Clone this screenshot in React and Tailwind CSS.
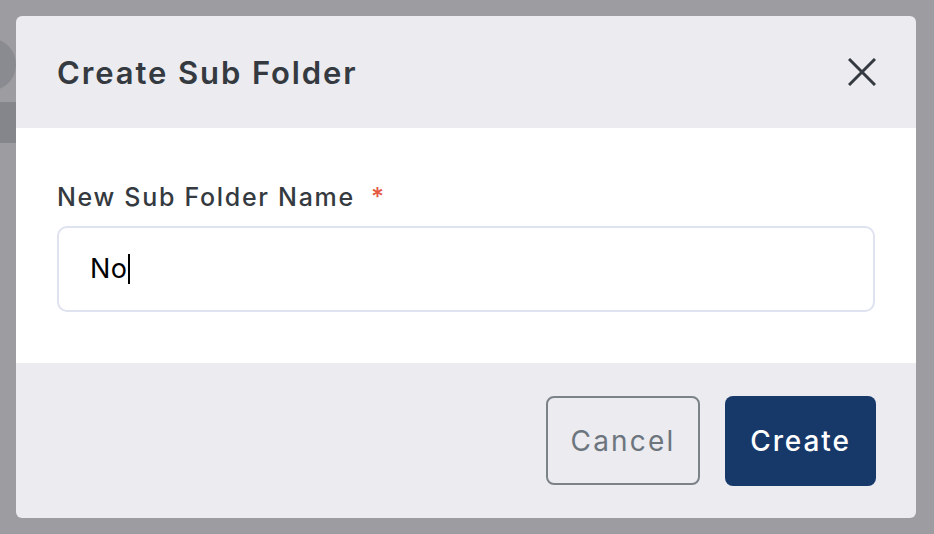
import React from "react";

export default function App() {
  return (
    <div className="relative w-[934px] h-[534px] bg-[#9d9da1] p-4 overflow-hidden" style={{ fontFamily: "Inter, 'Noto Sans', sans-serif" }}>
      {/* page behind the overlay */}
      <div className="absolute left-[-38px] top-[38px] w-[54px] h-[53px] rounded-full bg-[#8a8b90]" />
      <div className="absolute left-0 top-[102px] w-[16px] h-[41px] bg-[#85868b]" />

      <div className="relative w-[900px] h-[502px] rounded-md overflow-hidden flex flex-col">
        <div className="h-[112px] bg-[#ebebf0] flex items-center justify-between pl-[41px] pr-[40px]">
          <h2 className="text-[31px] font-semibold text-[#343a40] tracking-[1.9px] leading-none">Create Sub Folder</h2>
          <button className="w-[28px] h-[28px] flex items-center justify-center">
            <svg width="28" height="28" viewBox="0 0 28 28" fill="none" stroke="#343a40" strokeWidth="3" strokeLinecap="butt">
              <path d="M1 1 L27 27 M27 1 L1 27" />
            </svg>
          </button>
        </div>

        <div className="h-[235px] bg-white px-[41px] pt-[54px]">
          <div className="flex items-center text-[25px] font-medium text-[#343a40] leading-[30px] tracking-[1.7px]">
            New Sub Folder Name <span className="ml-[16px] text-[#e5573f]">*</span>
          </div>
          <div className="mt-[14px] h-[86px] rounded-[10px] border-2 border-[#dfe2ef] flex items-center pl-[31px]">
            <span className="text-[27px] text-black tracking-[0.5px]">No</span>
            <span className="w-[2px] h-[30px] bg-black" />
          </div>
        </div>

        <div className="flex-1 bg-[#ebebf0] flex items-center justify-end gap-[25px] pr-[40px]">
          <button className="w-[154px] h-[89px] rounded-[8px] border-2 border-[#7d8289] text-[28px] text-[#6c757d] tracking-[2.2px]">
            Cancel
          </button>
          <button className="w-[151px] h-[90px] rounded-[8px] bg-[#17396a] text-[28px] font-medium text-white tracking-[1.9px]">
            Create
          </button>
        </div>
      </div>
    </div>
  );
}
